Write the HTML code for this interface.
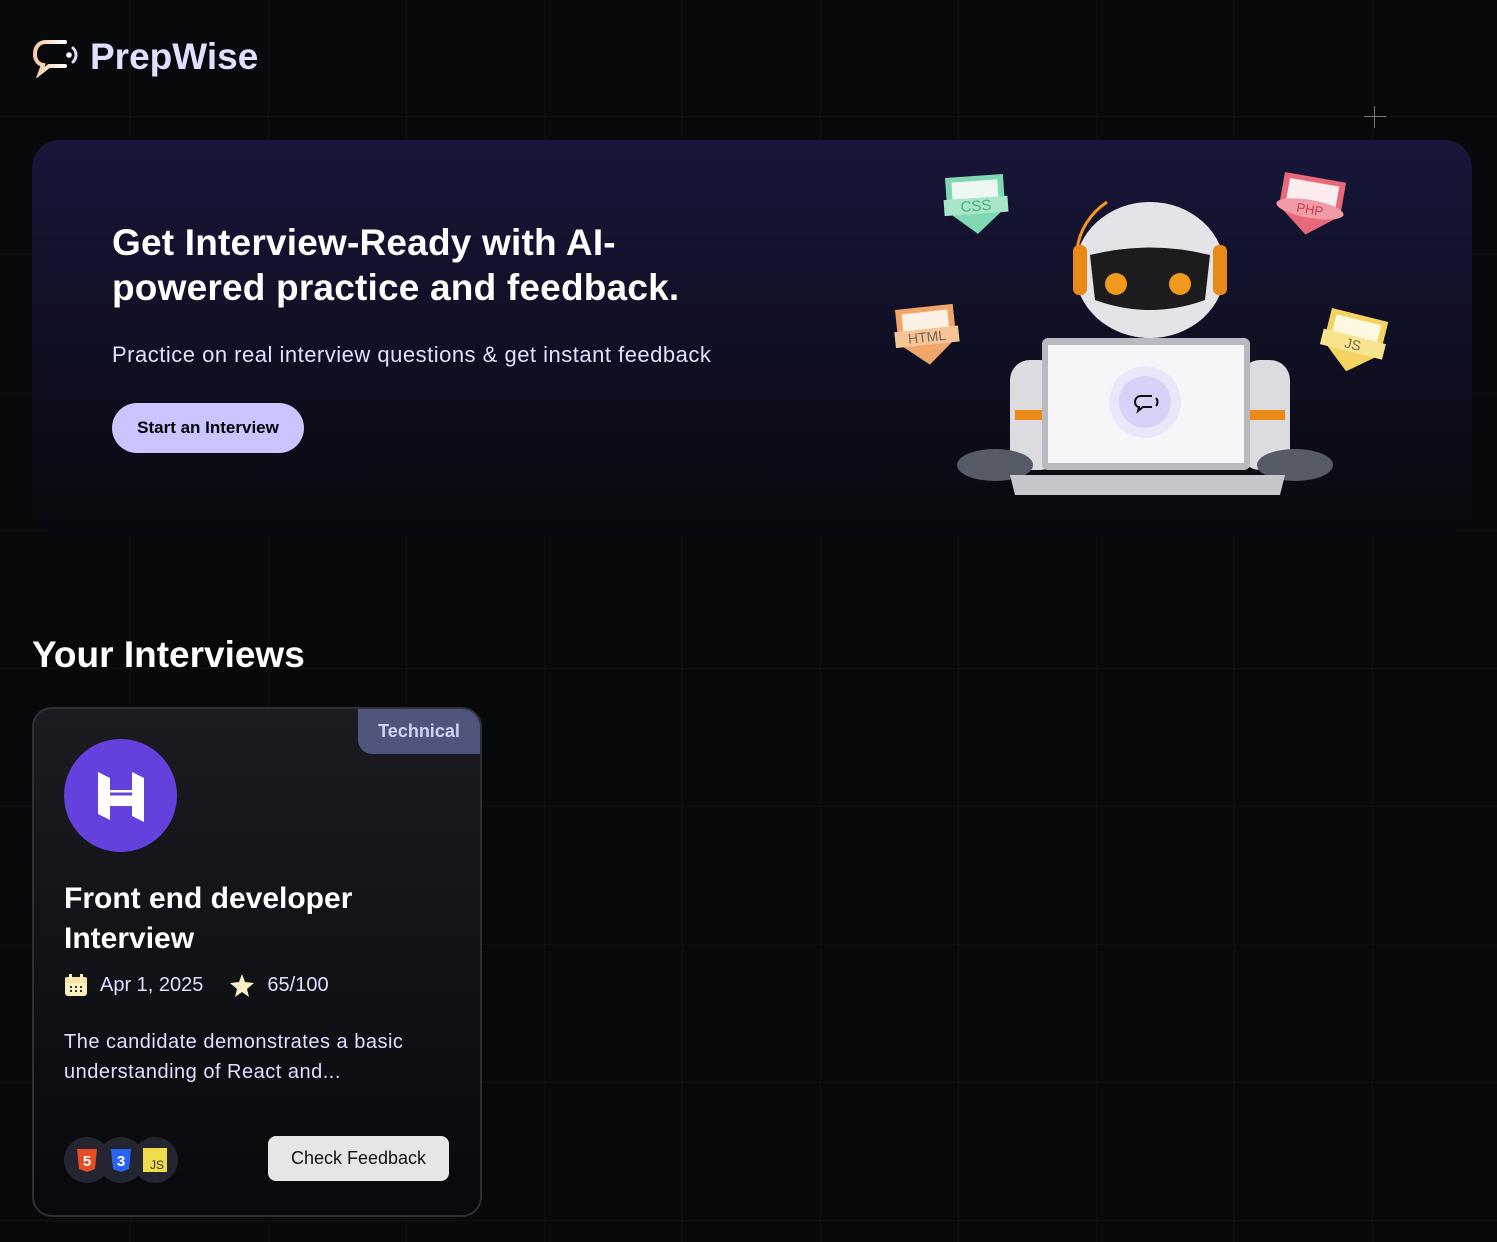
<!DOCTYPE html>
<html><head><meta charset="utf-8"><style>
*{margin:0;padding:0;box-sizing:border-box}
body{width:1497px;height:1242px;background:#08090b;font-family:"Liberation Sans",sans-serif;color:#fff;position:relative;overflow:hidden;
background-image:linear-gradient(rgba(255,255,255,0.025) 1px,transparent 1px),linear-gradient(90deg,rgba(255,255,255,0.025) 1px,transparent 1px);background-size:138px 138px;background-position:-8px -22px}
.logo{position:absolute;left:32px;top:36px;display:flex;align-items:center}
.logo span{font-size:37px;font-weight:bold;color:#dde0ff;margin-left:10px;letter-spacing:0}
.banner{position:absolute;left:32px;top:140px;width:1440px;height:394px;border-radius:28px;background:linear-gradient(180deg,#17163a 0%,#0f0f22 55%,#08090e 100%)}
h1{position:absolute;left:112px;top:220px;font-size:37px;line-height:45px;font-weight:bold;letter-spacing:0.2px;color:#fff}
.sub{position:absolute;left:112px;top:342px;font-size:22px;color:#dde0ff;letter-spacing:0.5px}
.btn{position:absolute;left:112px;top:403px;width:192px;height:50px;border-radius:25px;background:#cac5fe;color:#020408;font-weight:bold;font-size:17px;display:flex;align-items:center;justify-content:center;letter-spacing:0}
h2{position:absolute;left:32px;top:634px;font-size:37px;font-weight:bold;letter-spacing:0}
.card{position:absolute;left:32px;top:707px;width:450px;height:510px;border-radius:20px;border:2px solid #2e3036;background:linear-gradient(180deg,#1a1c21,#08090d);overflow:hidden}
.tag{position:absolute;right:0;top:0;width:122px;height:45px;background:#4f557d;border-bottom-left-radius:14px;color:#cfd3f5;font-weight:bold;font-size:18px;display:flex;align-items:center;justify-content:center}
.av{position:absolute;left:30px;top:30px;width:113px;height:113px;border-radius:50%;background:#6440dc}
.title{position:absolute;left:30px;top:170px;font-size:30px;line-height:40px;font-weight:bold;letter-spacing:0}
.meta{position:absolute;left:30px;top:264px;font-size:20px;color:#dde0ff;display:flex;align-items:center}
.desc{position:absolute;left:30px;top:318px;font-size:20px;line-height:30px;color:#dde0ff;letter-spacing:0.5px}
.icons{position:absolute;left:30px;top:428px;display:flex}
.ic{width:46px;height:46px;border-radius:50%;background:#232530;margin-right:-12px;display:flex;align-items:center;justify-content:center}
.fb{position:absolute;left:234px;top:427px;width:181px;height:45px;border-radius:8px;background:#e6e6e6;color:#111;font-size:18px;display:flex;align-items:center;justify-content:center}
</style></head><body>
<div class="logo">
<svg width="48" height="42" viewBox="0 0 48 42"><defs><linearGradient id="lg" x1="0" x2="1"><stop offset="0" stop-color="#f8c9a0"/><stop offset="1" stop-color="#ffffff"/></linearGradient></defs>
<path d="M33 6 H14 C7 6 3 11 3 18 C3 24 6 28 11 29 L8 37 L17 30 H33" fill="none" stroke="url(#lg)" stroke-width="4" stroke-linecap="round"/>
<circle cx="37" cy="19" r="2.8" fill="#fff"/><path d="M41 12 C45 16 45 22 41 26" stroke="#dde0ff" stroke-width="3" fill="none" stroke-linecap="round"/></svg>
<span>PrepWise</span></div>
<div style="position:absolute;left:1374px;top:106px;width:1px;height:22px;background:#777"></div><div style="position:absolute;left:1364px;top:116px;width:22px;height:1px;background:#777"></div>
<div class="banner"></div>
<h1>Get Interview-Ready with AI-<br>powered practice and feedback.</h1>
<div class="sub">Practice on real interview questions &amp; get instant feedback</div>
<div class="btn">Start an Interview</div>
<svg style="position:absolute;left:880px;top:160px" width="520" height="350" viewBox="0 0 520 350">
<g transform="translate(65,18) rotate(-4)"><path d="M0 0h58v34l-29 24-29-24z" fill="#7fd8b0"/><rect x="6" y="5" width="46" height="26" fill="#eef8f2"/><rect x="-3" y="22" width="64" height="16" fill="#a8e6c9"/><text x="29" y="35" font-size="15" text-anchor="middle" fill="#5a7" font-family="Liberation Sans">CSS</text></g>
<g transform="translate(405,12) rotate(10)"><path d="M0 0h62v34l-31 24-31-24z" fill="#e86a7a"/><rect x="6" y="5" width="50" height="26" fill="#fbecee"/><ellipse cx="31" cy="32" rx="34" ry="9" fill="#f29aa5"/><text x="31" y="37" font-size="13" text-anchor="middle" fill="#b45" font-family="Liberation Sans">PHP</text></g>
<g transform="translate(15,150) rotate(-6)"><path d="M0 0h58v34l-29 24-29-24z" fill="#f0a56a"/><rect x="6" y="5" width="46" height="26" fill="#fdf1e6"/><rect x="-3" y="22" width="64" height="16" fill="#f6c597"/><text x="29" y="35" font-size="14" text-anchor="middle" fill="#765" font-family="Liberation Sans">HTML</text></g>
<g transform="translate(452,148) rotate(14)"><path d="M0 0h58v34l-29 24-29-24z" fill="#f4d460"/><rect x="6" y="5" width="46" height="26" fill="#fdf8e0"/><rect x="-3" y="22" width="64" height="16" fill="#f8e48e"/><text x="29" y="35" font-size="14" text-anchor="middle" fill="#765" font-family="Liberation Sans">JS</text></g>
<ellipse cx="270" cy="110" rx="75" ry="68" fill="#e4e4e8"/><path d="M197 90 a75 68 0 0 1 30-48" stroke="#f39a1e" stroke-width="3" fill="none"/>
<rect x="193" y="85" width="14" height="50" rx="6" fill="#e98a18"/><rect x="333" y="85" width="14" height="50" rx="6" fill="#e98a18"/>
<path d="M210 95 Q270 80 330 95 L325 140 Q270 160 215 140z" fill="#1c1c1e"/>
<circle cx="236" cy="124" r="11" fill="#f39a1e"/><circle cx="300" cy="124" r="11" fill="#f39a1e"/>
<rect x="130" y="200" width="50" height="110" rx="20" fill="#dcdce0"/><rect x="360" y="200" width="50" height="110" rx="20" fill="#dcdce0"/>
<rect x="135" y="250" width="40" height="10" fill="#e98a18"/><rect x="365" y="250" width="40" height="10" fill="#e98a18"/>
<ellipse cx="115" cy="305" rx="38" ry="16" fill="#555a66"/><ellipse cx="415" cy="305" rx="38" ry="16" fill="#555a66"/>
<rect x="162" y="178" width="208" height="132" rx="6" fill="#b8bac0"/><rect x="168" y="185" width="196" height="118" fill="#f6f6f8"/>
<path d="M130 315 h275 l-5 20 h-265z" fill="#c4c6cc"/>
<circle cx="265" cy="242" r="36" fill="#ebe7fb"/><circle cx="265" cy="242" r="26" fill="#d8d1f8"/>
<path d="M272 236h-11c-4 0-6 3-6 6 0 3 2 5 4 5l-1 4 5-4h9" stroke="#111" stroke-width="2" fill="none"/><path d="M276 238c2 2 2 6 0 8" stroke="#111" stroke-width="2" fill="none"/>
</svg>
<h2>Your Interviews</h2>
<div class="card">
<div class="tag">Technical</div>
<div class="av"><svg width="113" height="113" viewBox="0 0 113 113"><path d="M34 33l12 6v12l22 0v-18l12 6v44l-12-6v-10h-22l0 14-12-6z" fill="#fff"/><path d="M46 55h22" stroke="#6440dc" stroke-width="3"/></svg></div>
<div class="title">Front end developer<br>Interview</div>
<div class="meta"><svg width="24" height="24" viewBox="0 0 24 24"><rect x="1" y="4" width="22" height="19" rx="3" fill="#fbefc4"/><rect x="1" y="4" width="22" height="6" rx="2" fill="#f5e3a0"/><rect x="5" y="1" width="3" height="6" fill="#fbefc4"/><rect x="16" y="1" width="3" height="6" fill="#fbefc4"/><g fill="#333"><rect x="6" y="13" width="2" height="2"/><rect x="11" y="13" width="2" height="2"/><rect x="16" y="13" width="2" height="2"/><rect x="6" y="17" width="2" height="2"/><rect x="11" y="17" width="2" height="2"/><rect x="16" y="17" width="2" height="2"/></g></svg>
<span style="margin-left:12px">Apr 1, 2025</span>
<svg style="margin-left:26px" width="26" height="24" viewBox="0 0 26 24"><path d="M13 1l3 8 9 1-7 6 2 8-7-5-7 5 2-8-7-6 9-1z" fill="#fbefc4"/></svg>
<span style="margin-left:12px">65/100</span></div>
<div class="desc">The candidate demonstrates a basic<br>understanding of React and...</div>
<div class="icons">
<div class="ic"><svg width="22" height="24" viewBox="0 0 22 24"><path d="M1 1h20l-2 20-8 3-8-3z" fill="#e44d26"/><text x="11" y="18" font-size="15" font-weight="bold" fill="#fff" text-anchor="middle" font-family="Liberation Sans">5</text></svg></div>
<div class="ic"><svg width="22" height="24" viewBox="0 0 22 24"><path d="M1 1h20l-2 20-8 3-8-3z" fill="#2965f1"/><text x="11" y="18" font-size="15" font-weight="bold" fill="#fff" text-anchor="middle" font-family="Liberation Sans">3</text></svg></div>
<div class="ic"><svg width="24" height="24"><rect width="24" height="24" fill="#f0db4f"/><text x="14" y="21" font-size="12" fill="#323330" text-anchor="middle" font-family="Liberation Sans">JS</text></svg></div>
</div>
<div class="fb">Check Feedback</div>
</div>
</body></html>
